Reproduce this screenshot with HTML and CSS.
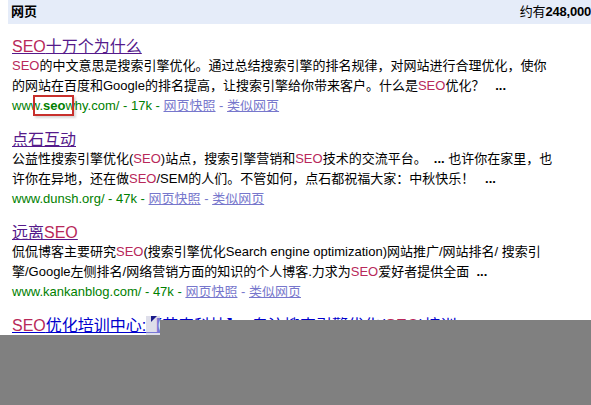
FILE: index.html
```html
<!DOCTYPE html>
<html lang="zh-CN">
<head>
    <meta charset="UTF-8">
    <title>SEO - 网页搜索</title>
    <link rel="stylesheet" href="styles.css">
</head>
<body>
    <div class="bar">
        <div class="bar-title">网页</div>
        <div class="bar-count">约有<b>248,000</b></div>
    </div>
    <div class="results">
        <div class="result">
            <a class="title visited" href="#"><em>SEO</em>十万个为什么</a>
            <div class="snippet"><em>SEO</em>的中文意思是搜索引擎优化。通过总结搜索引擎的排名规律，对网站进行合理优化，使你<br>的网站在百度和Google的排名提高，让搜索引擎给你带来客户。什么是<em>SEO</em>优化？ &nbsp;&nbsp;<b>...</b></div>
            <div class="meta">
                <span class="url">www.<b>seo</b>why.com/ - 17k - </span><a class="cache" href="#">网页快照</a> - <a class="cache" href="#">类似网页</a>
                <span class="mark"></span>
            </div>
        </div>
        <div class="result">
            <a class="title visited" href="#">点石互动</a>
            <div class="snippet">公益性搜索引擎优化(<em>SEO</em>)站点，搜索引擎营销和<em>SEO</em>技术的交流平台。 &nbsp;<b>...</b> 也许你在家里，也<br>许你在异地，还在做<em>SEO</em>/SEM的人们。不管如何，点石都祝福大家：中秋快乐！ &nbsp;&nbsp;<b>...</b></div>
            <div class="meta">
                <span class="url">www.dunsh.org/ - 47k - </span><a class="cache" href="#">网页快照</a> - <a class="cache" href="#">类似网页</a>
            </div>
        </div>
        <div class="result">
            <a class="title visited" href="#">远离<em>SEO</em></a>
            <div class="snippet">侃侃博客主要研究<em>SEO</em>(搜索引擎优化Search engine optimization)网站推广/网站排名/ 搜索引<br>擎/Google左侧排名/网络营销方面的知识的个人博客.力求为<em>SEO</em>爱好者提供全面 &nbsp;<b>...</b></div>
            <div class="meta">
                <span class="url">www.kankanblog.com/ - 47k - </span><a class="cache" href="#">网页快照</a> - <a class="cache" href="#">类似网页</a>
            </div>
        </div>
        <div class="result">
            <a class="title" href="#"><em>SEO</em>优化培训中心:【艾奇科技】- 专注搜索引擎优化(<em>SEO</em>)培训</a>
        </div>
    </div>
    <div class="select-patch"><span class="handle"></span></div>
    <div class="shade shade-right"></div>
    <div class="shade shade-full"></div>
</body>
</html>
```

FILE: styles.css
```css
* { margin: 0; padding: 0; box-sizing: border-box; }
html, body { overflow: hidden; }
body { font-family: "Liberation Sans", "Noto Sans CJK SC", sans-serif; font-size: 13px; color: #000; background: #fff; width: 591px; height: 405px; position: relative; }
a { text-decoration: underline; }
em { font-style: normal; color: #b8285a; }
.bar { margin-left: 8px; height: 24px; line-height: 24px; background: #e5ecf9; display: flex; justify-content: space-between; white-space: nowrap; }
.bar-title { padding-left: 3px; font-weight: bold; }
.bar-count { letter-spacing: -0.2px; }
.results { padding: 14px 0 0 12px; }
.result { margin-bottom: 16px; }
.title { display: block; font-size: 16px; line-height: 18px; color: #00c; }
.title.visited { color: #551a8b; }
.snippet { line-height: 20px; white-space: nowrap; }
.meta { position: relative; line-height: 19px; color: #77c; white-space: nowrap; }
.url { color: #008000; }
.cache { color: #77c; }
.mark { position: absolute; left: 21px; top: -1px; width: 41px; height: 21px; border: 2px solid #c8302c; box-shadow: 2px 2px 2px rgba(0, 0, 0, 0.15); }
.shade { position: absolute; background: #808080; }
.shade-right { left: 160px; top: 320px; right: 0; height: 16px; }
.shade-full { left: 0; top: 335px; right: 0; bottom: 0; }
.select-patch { position: absolute; left: 146px; top: 316px; width: 14px; height: 19px; background: rgba(200, 200, 220, 0.6); }
.handle { position: absolute; left: 5px; top: 0; width: 0; height: 0; border-top: 6px solid #1a1a8a; border-right: 6px solid transparent; }
```
